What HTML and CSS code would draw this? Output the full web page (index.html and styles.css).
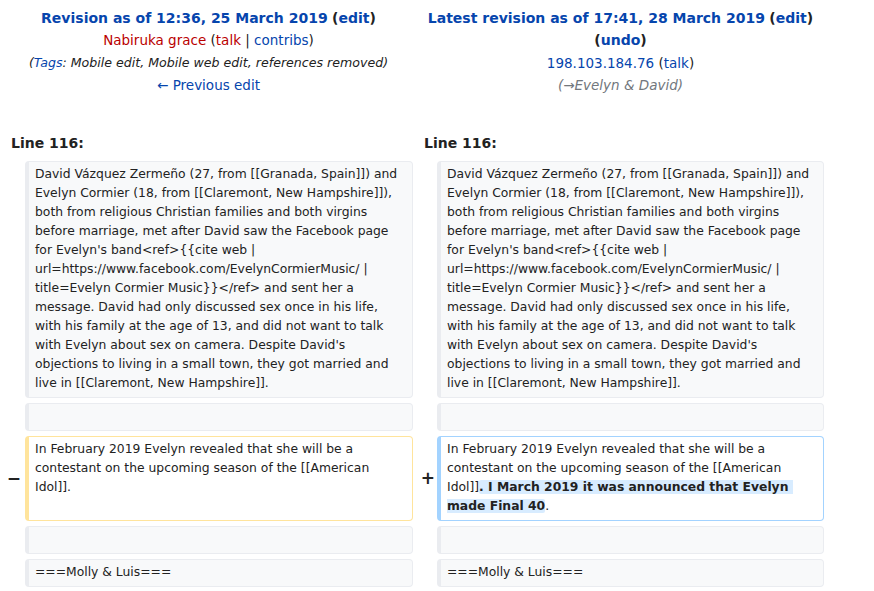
FILE: index.html
```html
<!DOCTYPE html>
<html>
<head>
<meta charset="utf-8">
<link rel="stylesheet" href="styles.css">
</head>
<body>
<div class="diff">
  <div class="title">
    <div class="t-line head"><a class="strong" href="#">Revision as of 12:36, 25 March 2019</a> <span class="strong">(<a href="#">edit</a>)</span></div>
    <div class="t-line"><a class="new" href="#">Nabiruka grace</a> (<a class="new" href="#">talk</a> | <a href="#">contribs</a>)</div>
    <div class="t-line tags">(<a href="#">Tags</a>: Mobile edit, Mobile web edit, references removed)</div>
    <div class="t-line"><a href="#">← Previous edit</a></div>
  </div>
  <div class="title">
    <div class="t-line head"><a class="strong" href="#">Latest revision as of 17:41, 28 March 2019</a> <span class="strong">(<a href="#">edit</a>)</span></div>
    <div class="t-line head"><span class="strong">(<a href="#">undo</a>)</span></div>
    <div class="t-line"><a href="#">198.103.184.76</a> (<a href="#">talk</a>)</div>
    <div class="t-line comment">(→Evelyn &amp; David)</div>
  </div>

  <div class="lineno">Line 116:</div>
  <div class="lineno">Line 116:</div>

  <div class="marker"></div>
  <div class="cell context">David Vázquez Zermeño (27, from [[Granada, Spain]]) and Evelyn Cormier (18, from [[Claremont, New Hampshire]]), both from religious Christian families and both virgins before marriage, met after David saw the Facebook page for Evelyn's band&lt;ref&gt;{{cite web | url=https://www.facebook.com/EvelynCormierMusic/ | title=Evelyn Cormier Music}}&lt;/ref&gt; and sent her a message. David had only discussed sex once in his life, with his family at the age of 13, and did not want to talk with Evelyn about sex on camera. Despite David's objections to living in a small town, they got married and live in [[Claremont, New Hampshire]].</div>
  <div class="marker"></div>
  <div class="cell context">David Vázquez Zermeño (27, from [[Granada, Spain]]) and Evelyn Cormier (18, from [[Claremont, New Hampshire]]), both from religious Christian families and both virgins before marriage, met after David saw the Facebook page for Evelyn's band&lt;ref&gt;{{cite web | url=https://www.facebook.com/EvelynCormierMusic/ | title=Evelyn Cormier Music}}&lt;/ref&gt; and sent her a message. David had only discussed sex once in his life, with his family at the age of 13, and did not want to talk with Evelyn about sex on camera. Despite David's objections to living in a small town, they got married and live in [[Claremont, New Hampshire]].</div>

  <div class="marker"></div>
  <div class="cell context"><br></div>
  <div class="marker"></div>
  <div class="cell context"><br></div>

  <div class="marker">−</div>
  <div class="cell deleted">In February 2019 Evelyn revealed that she will be a contestant on the upcoming season of the [[American Idol]].</div>
  <div class="marker plus">+</div>
  <div class="cell added">In February 2019 Evelyn revealed that she will be a contestant on the upcoming season of the [[American Idol]]<ins>. I March 2019 it was announced that Evelyn made Final 40</ins>.</div>

  <div class="marker"></div>
  <div class="cell context"><br></div>
  <div class="marker"></div>
  <div class="cell context"><br></div>

  <div class="marker"></div>
  <div class="cell context">===Molly &amp; Luis===</div>
  <div class="marker"></div>
  <div class="cell context">===Molly &amp; Luis===</div>
</div>
</body>
</html>
```

FILE: styles.css
```css
html, body {
  margin: 0;
  padding: 0;
  background: #ffffff;
}
body {
  font-family: "DejaVu Sans", sans-serif;
  font-size: 14px;
  color: #222222;
}
a {
  color: #0645ad;
  text-decoration: none;
}
a.new {
  color: #ba0000;
}
.diff {
  display: grid;
  grid-template-columns: 17px 388px 16px 387px;
  column-gap: 4px;
  row-gap: 5px;
  padding: 7px 4px 0 4px;
  align-items: stretch;
}
.title {
  grid-column: span 2;
  text-align: center;
  font-size: 13.5px;
  line-height: 22.4px;
}
.t-line {
  white-space: nowrap;
}
.t-line.head {
  font-size: 14px;
}
.strong {
  font-weight: bold;
  color: #222222;
}
a.strong {
  color: #0645ad;
}
.strong a {
  color: #0645ad;
}
.tags {
  font-style: italic;
  font-size: 12.6px;
}
.comment {
  font-style: italic;
  color: #72777d;
}
.lineno {
  grid-column: span 2;
  font-weight: bold;
  font-size: 14px;
  line-height: 20px;
  padding: 0 7px;
  margin-top: 31px;
  margin-bottom: 3px;
}
.marker {
  display: flex;
  align-items: center;
  justify-content: flex-end;
  font-weight: bold;
  font-size: 17px;
}
.marker.plus {
  margin-right: -2px;
}
.cell {
  font-size: 12.35px;
  line-height: 19px;
  white-space: pre-wrap;
  word-wrap: break-word;
  border-style: solid;
  border-width: 1px 1px 1px 4px;
  border-radius: 4px;
  padding: 3.5px 6px;
}
.context {
  background: #f8f9fa;
  border-color: #eaecf0;
  color: #222222;
}
.deleted {
  background: #ffffff;
  border-color: #ffe49c;
}
.added {
  background: #ffffff;
  border-color: #a3d3ff;
}
ins {
  text-decoration: none;
  font-weight: bold;
  background: #d8ecff;
  border-radius: 2px;
}
```
